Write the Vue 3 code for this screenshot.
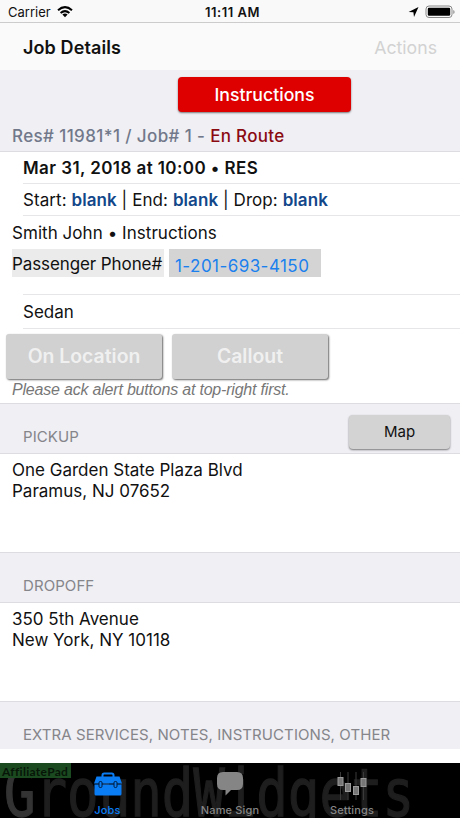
<script setup>
const sliders = [
  { x: 4.5, y: 6 },
  { x: 12, y: 12 },
  { x: 20, y: 15 },
  { x: 27.5, y: 7 }
]
</script>

<template>
  <div class="app">
    <header class="status">
      <div class="carrier">
        <span>Carrier</span>
        <svg width="16" height="12" viewBox="0 0 16 12">
          <path d="M1 4.2Q8-2 15 4.2M3.6 7Q8 3.2 12.4 7" fill="none" stroke="#000" stroke-width="2" />
          <path d="M5.4 8.4Q8 6.4 10.6 8.4L8 11.2Z" />
        </svg>
      </div>
      <span class="time">11:11 AM</span>
      <div class="power">
        <svg width="11" height="12" viewBox="0 0 11 12"><path d="M10.5 1L6 11L5.4 6.3L.6 6.1Z" /></svg>
        <svg width="30" height="14" viewBox="0 0 30 14">
          <rect x="1" y="1" width="26" height="11.5" rx="3" fill="none" stroke="#888" />
          <rect x="2.8" y="2.8" width="22.4" height="8" rx="1.2" />
          <path d="M28.3 5v4q1.3-.6 1.3-2T28.3 5" fill="#888" />
        </svg>
      </div>
    </header>

    <nav class="nav">
      <h1>Job Details</h1>
      <span class="actions">Actions</span>
    </nav>

    <section class="job-head">
      <button class="btn-instructions">Instructions</button>
      <p class="job-number">Res# 11981*1 / Job# 1 - <b>En Route</b></p>
    </section>

    <div class="row date"><span>Mar 31, 2018 at 10:00 • RES</span></div>
    <div class="row times"><span>Start: <b>blank</b> | End: <b>blank</b> | Drop: <b>blank</b></span></div>
    <div class="passenger">
      <p class="name">Smith John • Instructions</p>
      <div class="phone">
        <span class="phone-label">Passenger Phone#</span>
        <a class="phone-number">1-201-693-4150</a>
      </div>
    </div>
    <div class="row sedan"><span>Sedan</span></div>

    <div class="buttons">
      <button class="btn-disabled">On Location</button>
      <button class="btn-disabled">Callout</button>
    </div>
    <p class="hint">Please ack alert buttons at top-right first.</p>

    <div class="section-head">
      <span>PICKUP</span>
      <button class="btn-map">Map</button>
    </div>
    <p class="address">One Garden State Plaza Blvd<br>Paramus, NJ 07652</p>
    <div class="section-head"><span>DROPOFF</span></div>
    <p class="address">350 5th Avenue<br>New York, NY 10118</p>
    <div class="section-head last"><span>EXTRA SERVICES, NOTES, INSTRUCTIONS, OTHER</span></div>

    <footer class="tabs">
      <div class="watermark"><span>G</span>roundWidgets</div>
      <div class="badge">AffiliatePad</div>
      <div class="tab active">
        <svg width="30" height="24" viewBox="0 0 30 24">
          <path d="M9.5 5V3.2Q9.5 1.5 11.2 1.5H18.8Q20.5 1.5 20.5 3.2V5" fill="none" stroke="currentColor" stroke-width="2" />
          <path d="M3.5 4.5H26.5L29 11.5H1ZM1.5 12.5H28.5V22Q28.5 23.5 27 23.5H3Q1.5 23.5 1.5 22Z" fill="currentColor" />
          <rect x="6" y="9.5" width="3" height="6" rx="1.2" fill="currentColor" stroke="#001b38" />
          <rect x="21" y="9.5" width="3" height="6" rx="1.2" fill="currentColor" stroke="#001b38" />
        </svg>
        <span>Jobs</span>
      </div>
      <div class="tab">
        <svg width="28" height="24" viewBox="0 0 28 24">
          <path d="M7 0H21Q27 0 27 6V12Q27 18 21 18H15L9.5 23.5V18H7Q1 18 1 12V6Q1 0 7 0Z" fill="currentColor" />
        </svg>
        <span>Name Sign</span>
      </div>
      <div class="tab">
        <svg width="32" height="28" viewBox="0 0 32 28">
          <g v-for="s in sliders" :key="s.x">
            <path :d="`M${s.x} 0V28`" stroke="#3a3a3a" />
            <rect :x="s.x - 2.5" :y="s.y - 0.5" width="5" height="8" fill="#777" stroke="#999" />
          </g>
        </svg>
        <span>Settings</span>
      </div>
    </footer>
  </div>
</template>

<style>
body { margin: 0; background: #fff; }
</style>

<style scoped>
.app {
  width: 460px;
  height: 818px;
  display: flex;
  flex-direction: column;
  overflow: hidden;
  background: #fff;
  color: #111;
  font-family: Inter, "Liberation Sans", sans-serif;
  font-size: 17px;
  white-space: nowrap;
}
.app * { box-sizing: border-box; }
h1, p { margin: 0; }
button { border: none; padding: 0; font-family: inherit; }
svg { display: block; }
.status {
  height: 23px;
  flex-shrink: 0;
  display: grid;
  grid-template-columns: 1fr auto 1fr;
  align-items: center;
  padding: 1px 5px 0 8px;
  background: #f9f9f9;
  border-bottom: 1px solid #ccc;
  font-size: 13px;
}
.carrier { display: flex; align-items: center; gap: 6px; }
.time { padding-left: 2px; font-weight: 600; letter-spacing: 0.5px; }
.power { display: flex; align-items: center; justify-content: flex-end; gap: 6px; }
.nav {
  height: 47px;
  flex-shrink: 0;
  display: flex;
  align-items: center;
  justify-content: space-between;
  padding: 1px 23px 0;
  background: #fafafa;
}
h1 { font-size: 18px; font-weight: 600; letter-spacing: 0.1px; }
.actions { font-size: 17.7px; color: #d2d2d2; }
.job-head {
  height: 82px;
  flex-shrink: 0;
  padding-top: 7px;
  background: #efeff4;
  border-bottom: 1px solid #dddde1;
}
.btn-instructions {
  display: block;
  width: 173px;
  height: 35px;
  margin-left: 178px;
  border-radius: 4px;
  background: #de0000;
  box-shadow: 0 1px 2px rgba(0, 0, 0, 0.5);
  color: #fff;
  font-size: 17.7px;
  font-weight: 500;
}
.job-number { margin: 14px 0 0 12px; line-height: 20px; font-weight: 500; letter-spacing: 0.38px; color: #71788a; }
.job-number b { font-weight: 500; letter-spacing: 0.3px; color: #8b0a12; }
.row { height: 32px; flex-shrink: 0; margin-left: 23px; line-height: 33px; border-bottom: 1px solid #e6e6e8; }
.date { font-weight: 600; letter-spacing: 0.42px; }
.times { letter-spacing: 0.07px; }
.times b { font-weight: 600; color: #12478a; }
.passenger { height: 78px; flex-shrink: 0; margin-left: 12px; padding-top: 7px; }
.row.sedan { height: 35px; line-height: 34px; border-top: 1px solid #e6e6e8; }
.name { line-height: 20px; letter-spacing: 0.05px; }
.phone { display: flex; gap: 5px; margin-top: 6px; }
.phone-label { width: 152px; height: 28px; line-height: 30px; letter-spacing: -0.1px; background: #ebebeb; }
.phone-number {
  width: 152px;
  height: 28px;
  padding-left: 6px;
  line-height: 34px;
  letter-spacing: 0.45px;
  background: #d4d4d4;
  color: #1a80ee;
}
.buttons { display: flex; flex-shrink: 0; gap: 10px; padding: 5px 6px 0; }
.btn-disabled {
  width: 156px;
  height: 45px;
  padding-bottom: 2px;
  border-radius: 3px;
  background: #d1d1d1;
  box-shadow: 1px 1px 2px rgba(0, 0, 0, 0.6);
  color: #f0f0f0;
  font-size: 19.4px;
  font-weight: 600;
}
.hint {
  height: 24px;
  flex-shrink: 0;
  padding-left: 12px;
  line-height: 22px;
  font-family: "Liberation Sans", sans-serif;
  font-size: 16px;
  font-style: italic;
  letter-spacing: -0.2px;
  color: #777;
}
.section-head {
  height: 51px;
  flex-shrink: 0;
  display: flex;
  justify-content: space-between;
  align-items: flex-start;
  padding: 11px 10px 0 23px;
  background: #efeff4;
  border-top: 1px solid #dddde1;
  border-bottom: 1px solid #dddde1;
  font-size: 15px;
  line-height: 44px;
  letter-spacing: 0.08px;
  color: #85858a;
}
.section-head.last { height: 48px; border-bottom: none; }
.btn-map {
  width: 101px;
  height: 34px;
  padding-bottom: 1px;
  border-radius: 4px;
  background: #d3d3d3;
  box-shadow: 0 1px 2px rgba(0, 0, 0, 0.5);
  color: #111;
  font-size: 15px;
}
.address { height: 98px; flex-shrink: 0; padding: 6px 0 0 12px; line-height: 21px; }
.tabs {
  position: relative;
  height: 55px;
  flex-shrink: 0;
  margin-top: auto;
  overflow: hidden;
  display: grid;
  grid-template-columns: 46px 123px 122px 122px;
  background: #000;
}
.watermark {
  position: absolute;
  left: 4px;
  top: 0;
  font-family: "DejaVu Sans Mono", monospace;
  font-size: 52.4px;
  line-height: 60px;
  color: #1e1e1e;
  -webkit-text-stroke: 1px currentColor;
  transform: scaleY(1.27);
}
.watermark span { color: #333; }
.badge {
  position: absolute;
  left: 0;
  top: 0;
  width: 71px;
  height: 15px;
  padding-left: 2px;
  background: #1b4a20;
  color: #071508;
  font-family: Lato, sans-serif;
  font-size: 12px;
  font-weight: 700;
  letter-spacing: 0.3px;
  line-height: 17px;
}
.tab {
  position: relative;
  display: flex;
  flex-direction: column;
  align-items: center;
  justify-content: space-between;
  padding: 9px 0 1px;
  color: #858585;
  font-size: 11px;
  font-weight: 500;
  line-height: 14px;
  letter-spacing: 0.15px;
}
.tab.active { grid-column: 2; color: #0a7df5; }
</style>
